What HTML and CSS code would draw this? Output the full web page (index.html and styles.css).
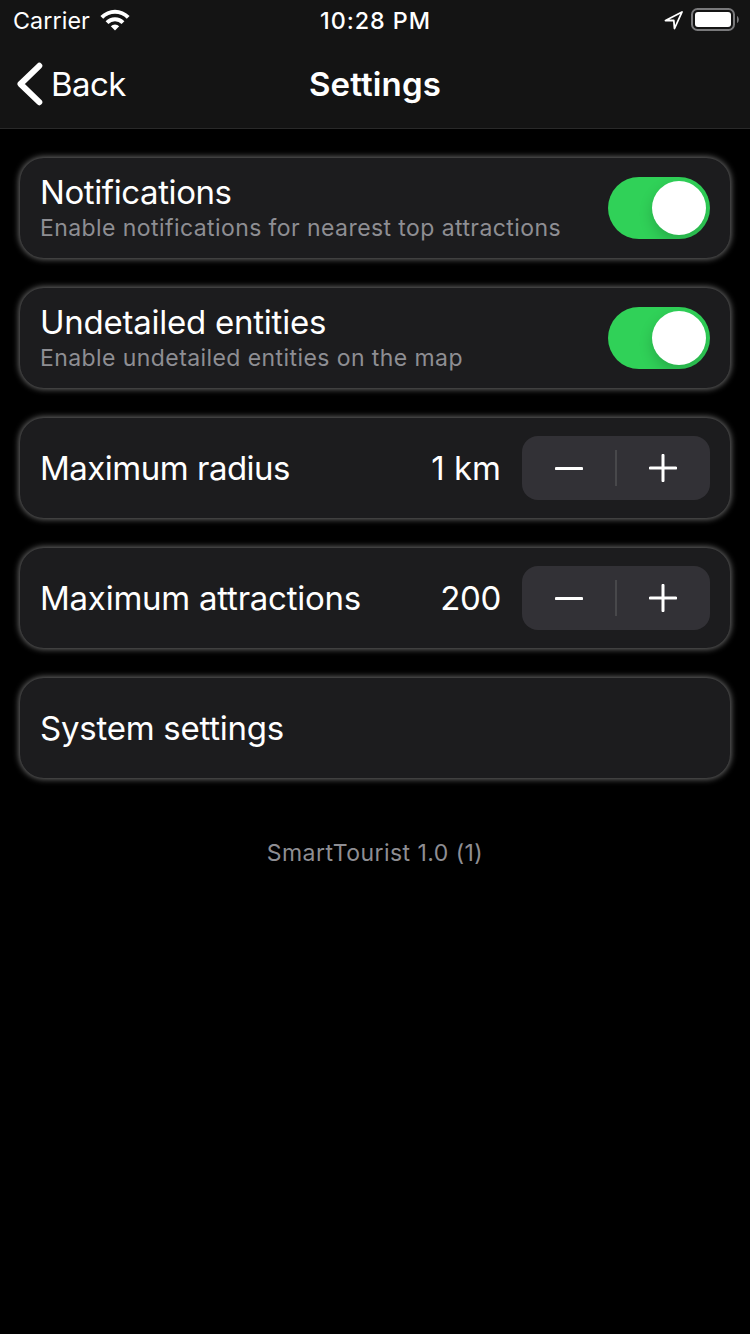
FILE: index.html
```html
<!DOCTYPE html>
<html lang="en">
<head>
<meta charset="utf-8">
<title>Settings</title>
<link rel="stylesheet" href="styles.css">
</head>
<body>
<header class="header">
  <div class="status">
    <div class="status-left"><span class="carrier">Carrier</span>
      <svg class="wifi" width="30" height="22" viewBox="0 0 30 22"><path d="M15 21.5 10.8 17.3a6 6 0 0 1 8.4 0ZM5.6 12.2a13.3 13.3 0 0 1 18.8 0l-2.8 2.8a9.4 9.4 0 0 0-13.2 0ZM.4 6.9a20.7 20.7 0 0 1 29.2 0l-2.8 2.8a16.7 16.7 0 0 0-23.6 0Z"/></svg>
    </div>
    <span class="time">10:28 PM</span>
    <div class="status-right">
      <svg class="location" width="20" height="20" viewBox="0 0 20 20"><path d="M1.5 10.5 18 2 10.5 18.5 9.8 10.5Z"/></svg>
      <svg class="battery" width="49" height="24" viewBox="0 0 49 24"><rect class="battery-case" x="2" y="1" width="42" height="21" rx="5.5"/><rect class="battery-fill" x="5" y="4" width="36" height="15" rx="3"/><path class="battery-tip" d="M47 8v7c2.4-1 2.4-6 0-7Z"/></svg>
    </div>
  </div>
  <nav class="nav">
    <a class="back"><svg class="chevron" width="26" height="44" viewBox="0 0 26 44"><path d="M22.3 3.8 3.5 22l18.8 18.2"/></svg><span class="back-label">Back</span></a>
    <h1 class="title">Settings</h1>
  </nav>
</header>
<main class="list">
  <section class="card">
    <div class="copy"><h2 class="label l-notif">Notifications</h2><p class="hint">Enable notifications for nearest top attractions</p></div>
    <span class="switch"><span class="knob"></span></span>
  </section>
  <section class="card">
    <div class="copy"><h2 class="label">Undetailed entities</h2><p class="hint">Enable undetailed entities on the map</p></div>
    <span class="switch"><span class="knob"></span></span>
  </section>
  <section class="card">
    <h2 class="label l-radius">Maximum radius</h2><span class="value">1 km</span>
    <div class="stepper"><svg class="minus" width="28" height="28" viewBox="0 0 28 28"><path d="M1.3 14.5h25.4"/></svg><i class="divider"></i><svg class="plus" width="28" height="28" viewBox="0 0 28 28"><path d="M1.3 14h25.4M14 1.3v25.4"/></svg></div>
  </section>
  <section class="card">
    <h2 class="label">Maximum attractions</h2><span class="value v-count">200</span>
    <div class="stepper"><svg class="minus" width="28" height="28" viewBox="0 0 28 28"><path d="M1.3 14.5h25.4"/></svg><i class="divider"></i><svg class="plus" width="28" height="28" viewBox="0 0 28 28"><path d="M1.3 14h25.4M14 1.3v25.4"/></svg></div>
  </section>
  <section class="card"><h2 class="label">System settings</h2></section>
</main>
<footer class="version">SmartTourist 1.0 (1)</footer>
</body>
</html>
```
FILE: styles.css
```css
* { box-sizing: border-box; margin: 0; padding: 0; }
body { width: 750px; height: 1334px; overflow: hidden; background: #000; color: #fff; font-family: Inter, "Liberation Sans", sans-serif; }
svg { display: block; flex: none; }
.header { height: 129px; background: #141414; border-bottom: 1px solid #292929; }
.status { height: 40px; display: grid; grid-template-columns: 1fr auto 1fr; align-items: center; font-size: 23.3px; line-height: 40px; }
.status-left { display: flex; align-items: center; padding-left: 13px; gap: 10px; }
.carrier, .time { padding-top: 2px; line-height: 38px; }
.carrier { letter-spacing: .08px; }
.wifi { fill: #fff; }
.time { font-weight: 500; letter-spacing: .95px; padding-left: 1px; }
.status-right { display: flex; justify-content: flex-end; align-items: center; gap: 6px; padding-right: 11px; }
.location { fill: none; stroke: #fff; stroke-width: 1.8; stroke-linejoin: round; }
.battery-case { fill: none; stroke: #79797b; stroke-width: 2; }
.battery-fill { fill: #fff; }
.battery-tip { fill: #79797b; }
.nav { height: 88px; display: grid; grid-template-columns: 1fr auto 1fr; align-items: center; font-size: 33px; }
.back { display: flex; align-items: center; padding-left: 17px; gap: 8px; letter-spacing: -.6px; }
.chevron { fill: none; stroke: #fff; stroke-width: 6; stroke-linecap: round; stroke-linejoin: round; }
.title { font-size: 33px; font-weight: 600; letter-spacing: .15px; }
.list { display: flex; flex-direction: column; gap: 30px; padding: 29px 20px 0; }
.card { height: 100px; display: flex; align-items: center; padding: 0 20px; border-radius: 24px; background: #1c1c1e; box-shadow: 0 0 6px 1px #727272; }
.copy { flex: 1; }
.label { flex: 1; font-size: 33px; font-weight: 400; line-height: 38px; letter-spacing: -.24px; white-space: nowrap; }
.l-notif { letter-spacing: -.4px; }
.l-radius { letter-spacing: -.5px; }
.hint { padding-top: 3px; font-size: 23px; line-height: 29px; letter-spacing: .42px; color: #8e8e93; white-space: nowrap; }
.value { font-size: 33px; line-height: 38px; }
.v-count { letter-spacing: -.3px; }
.switch { width: 102px; height: 62px; border-radius: 31px; background: #30d158; display: flex; justify-content: flex-end; padding: 4px; overflow: hidden; }
.knob { width: 54px; height: 54px; border-radius: 50%; background: #fff; box-shadow: 0 6px 14px rgba(0,0,0,.18); }
.stepper { width: 188px; height: 64px; margin-left: 21px; border-radius: 16px; background: #323136; display: grid; grid-template-columns: 1fr 2px 1fr; align-items: center; justify-items: center; }
.minus, .plus { fill: none; stroke: #fff; stroke-width: 3; stroke-linecap: round; }
.plus { margin-right: 2px; }
.divider { width: 2px; height: 36px; background: #48484b; }
.version { margin-top: 61px; text-align: center; font-size: 23px; line-height: 28px; letter-spacing: .46px; color: #8e8e93; }
```
